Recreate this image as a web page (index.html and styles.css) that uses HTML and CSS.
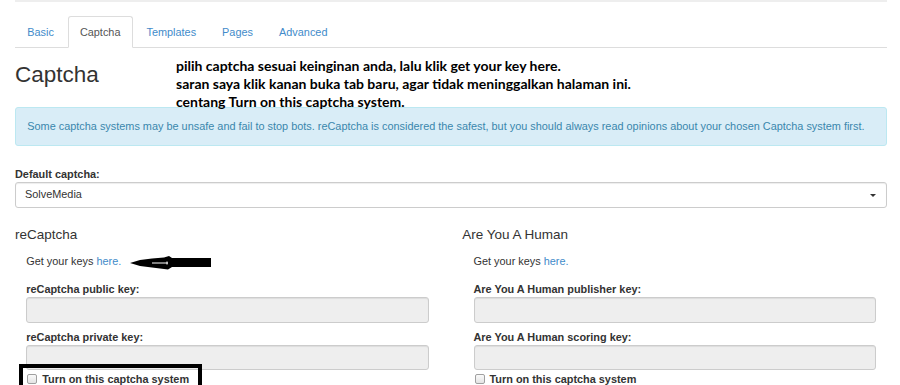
FILE: index.html
```html
<!DOCTYPE html>
<html lang="en">
<head>
    <meta charset="UTF-8">
    <title>Captcha settings</title>
    <link rel="stylesheet" href="styles.css">
</head>
<body>
    <div class="container">
        <div class="topline"></div>

        <ul class="tabs">
            <li><a href="#">Basic</a></li>
            <li class="active"><a href="#">Captcha</a></li>
            <li><a href="#">Templates</a></li>
            <li><a href="#">Pages</a></li>
            <li><a href="#">Advanced</a></li>
        </ul>

        <h2 class="page-title">Captcha</h2>

        <div class="alert">Some captcha systems may be unsafe and fail to stop bots. reCaptcha is considered the safest, but you should always read opinions about your chosen Captcha system first.</div>

        <div class="field">
            <label>Default captcha:</label>
            <div class="select">SolveMedia<span class="caret"></span></div>
        </div>

        <div class="cols">
            <div class="col">
                <h4>reCaptcha</h4>
                <div class="inner">
                    <p class="keys">Get your keys <a href="#">here.</a></p>
                    <label>reCaptcha public key:</label>
                    <div class="input"></div>
                    <label class="second">reCaptcha private key:</label>
                    <div class="input"></div>
                    <div class="check"><span class="box"></span>Turn on this captcha system</div>
                </div>
            </div>
            <div class="col">
                <h4>Are You A Human</h4>
                <div class="inner">
                    <p class="keys">Get your keys <a href="#">here.</a></p>
                    <label>Are You A Human publisher key:</label>
                    <div class="input"></div>
                    <label class="second">Are You A Human scoring key:</label>
                    <div class="input"></div>
                    <div class="check"><span class="box"></span>Turn on this captcha system</div>
                </div>
            </div>
        </div>
    </div>

    <!-- hand-drawn notes on top of the screenshot -->
    <div class="note">
        pilih captcha sesuai keinginan anda, lalu klik get your key here.<br>
        saran saya klik kanan buka tab baru, agar tidak meninggalkan halaman ini.<br>
        centang Turn on this captcha system.
    </div>
    <svg class="arrow" width="84" height="16" viewBox="128 255 84 16">
        <polygon points="130,263 140,260 152,258.5 164,257.5 169,256 172,258 211,258 211,267 172,267 168,269.5 152,267.5 140,266" fill="#000"/>
        <line x1="152" y1="263" x2="168" y2="263" stroke="#fff" stroke-width="1"/>
        <line x1="167" y1="261.5" x2="167" y2="264.5" stroke="#fff" stroke-width="1"/>
    </svg>
    <div class="frame"></div>
</body>
</html>
```

FILE: styles.css
```css
body {
    margin: 0;
    font-family: "Liberation Sans", Arial, sans-serif;
    font-size: 10.9px;
    line-height: 15px;
    color: #333;
    background: #fff;
    overflow: hidden;
}

a {
    color: #428bca;
    text-decoration: none;
}

.container {
    width: 872px;
    margin-left: 15px;
}

.topline {
    height: 2px;
    background: #eee;
}

.tabs {
    list-style: none;
    margin: 14px 0 0;
    padding: 0;
    display: flex;
    border-bottom: 1px solid #ddd;
}

.tabs li {
    margin-right: 1.5px;
    margin-bottom: -1px;
}

.tabs a {
    display: block;
    padding: 7.5px 11.25px;
    border: 1px solid transparent;
    border-radius: 3px 3px 0 0;
    line-height: 15px;
}

.tabs .active a {
    color: #555;
    background: #fff;
    border-color: #ddd #ddd transparent;
}

.page-title {
    font-size: 22.5px;
    font-weight: normal;
    line-height: 24.75px;
    margin: 15px 0 0;
}

.alert {
    margin-top: 19px;
    padding: 11.25px 11.25px;
    background: #d9edf7;
    border: 1px solid #bce8f1;
    border-radius: 3px;
    color: #3a87ad;
}

.field {
    margin-top: 21px;
}

label {
    display: block;
    font-weight: bold;
}

.select {
    position: relative;
    height: 23.5px;
    line-height: 23.5px;
    padding: 0 9px;
    border: 1px solid #ccc;
    border-radius: 3px;
    box-shadow: inset 0 1px 1px rgba(0,0,0,.075);
}

.caret {
    position: absolute;
    right: 10px;
    top: 11px;
    border-top: 3px solid #333;
    border-left: 3px solid transparent;
    border-right: 3px solid transparent;
}

.cols {
    display: grid;
    grid-template-columns: 1fr 1fr;
    column-gap: 22.5px;
    margin-top: 19px;
}

.col h4 {
    font-size: 13.5px;
    font-weight: normal;
    line-height: 15px;
    margin: 0;
}

.inner {
    padding: 0 11.25px;
}

.keys {
    margin: 12px 0 13.5px;
}

.input {
    height: 23.5px;
    border: 1px solid #ccc;
    border-radius: 3px;
    background: #eee;
    box-shadow: inset 0 1px 1px rgba(0,0,0,.075);
}

.second {
    margin-top: 7px;
}

.check {
    display: flex;
    align-items: center;
    font-weight: bold;
    margin-top: 1.5px;
}

.check .box {
    width: 8px;
    height: 8px;
    border: 1px solid #a0a0a0;
    border-radius: 2px;
    background: linear-gradient(#fafafa, #e4e4e4);
    margin: 0 5px 0 1px;
}

.note {
    position: absolute;
    left: 176px;
    top: 57px;
    font-family: Lato, "Open Sans", sans-serif;
    font-weight: bold;
    font-size: 14px;
    line-height: 18px;
    color: #000;
}

.arrow {
    position: absolute;
    left: 128px;
    top: 255px;
}

.frame {
    position: absolute;
    left: 19px;
    top: 364px;
    width: 175px;
    height: 16.5px;
    border: 4.5px solid #000;
    border-bottom: none;
}
```
